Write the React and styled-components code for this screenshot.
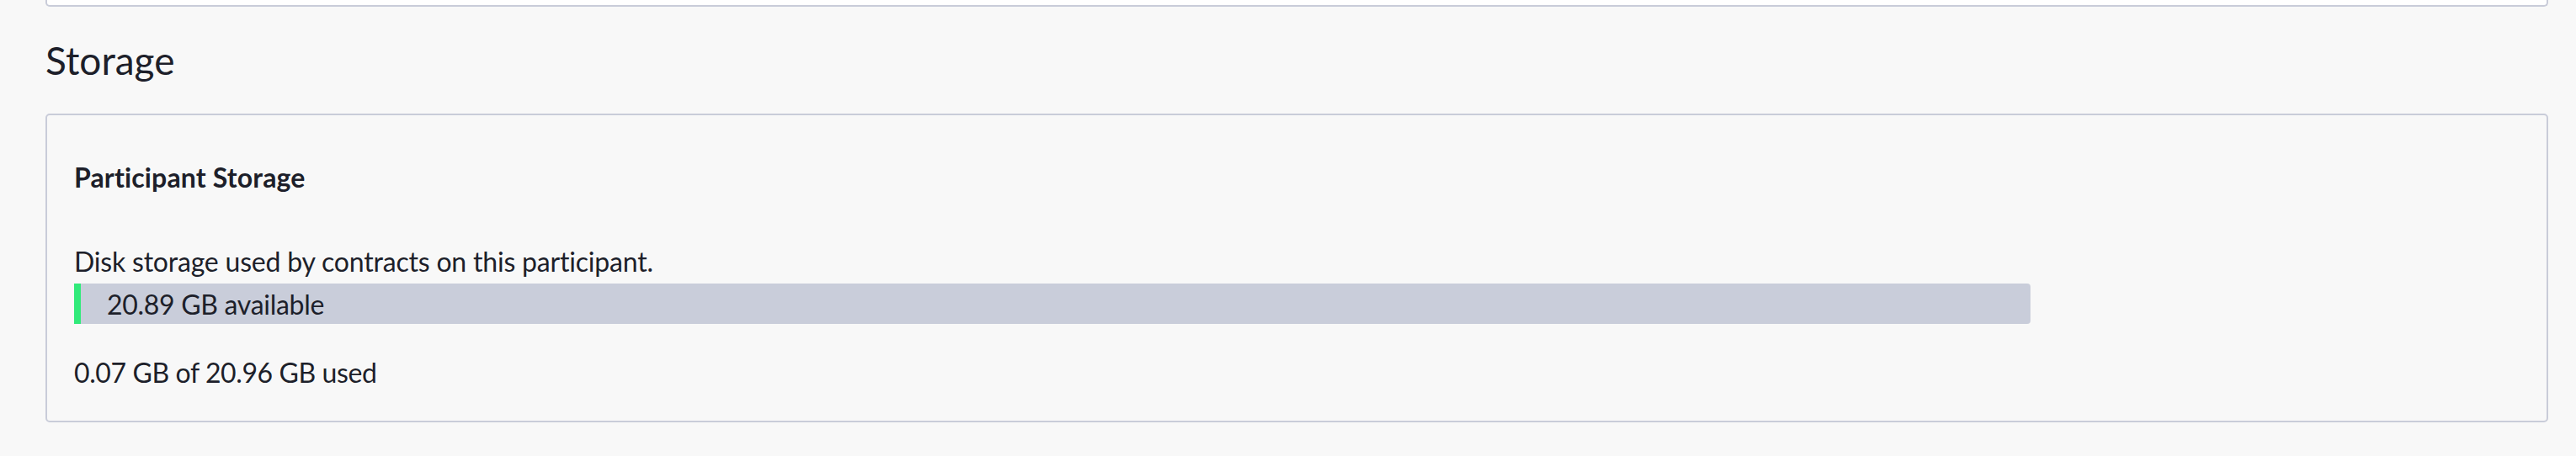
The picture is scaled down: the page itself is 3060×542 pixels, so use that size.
import React from "react";
import styled, { createGlobalStyle } from "styled-components";

const colors = {
  PAGE: "#f8f8f8",
  WHITE: "#ffffff",
  BORDER: "#c9ccd9",
  TEXT: "#1d1f2a",
  TRACK: "#c9cdda",
  GREEN: "#31ea7a",
};

const storage = { used: 0.07, total: 20.96 };

const GlobalStyle = createGlobalStyle`
  html, body {
    margin: 0;
    padding: 0;
    background: ${colors.PAGE};
  }
  body {
    font-family: Lato, "Liberation Sans", sans-serif;
    color: ${colors.TEXT};
  }
  * {
    box-sizing: border-box;
  }
`;

export default function App() {
  const available = (storage.total - storage.used).toFixed(2);
  const usedPct = (storage.used / storage.total) * 100;

  return (
    <>
      <GlobalStyle />
      <Page>
        <PrevCard />
        <SectionTitle>Storage</SectionTitle>
        <Card>
          <CardTitle>Participant Storage</CardTitle>
          <Text $top={52} $spacing={-0.2}>
            Disk storage used by contracts on this participant.
          </Text>
          <Track>
            <Fill style={{ width: `${usedPct}%` }} />
            <TrackLabel>{available} GB available</TrackLabel>
          </Track>
          <Text $top={34} $spacing={-0.4}>
            {storage.used.toFixed(2)} GB of {storage.total.toFixed(2)} GB used
          </Text>
        </Card>
      </Page>
    </>
  );
}

const Page = styled.main`
  display: flex;
  flex-direction: column;
  padding: 0 33px 40px 54px;
`;

// bottom edge of the card above, scrolled out of view
const PrevCard = styled.div`
  height: 8px;
  background: ${colors.WHITE};
  border: 2px solid ${colors.BORDER};
  border-top: none;
  border-radius: 0 0 5px 5px;
`;

const SectionTitle = styled.h2`
  margin: 36px 0;
  font-size: 46px;
  font-weight: 400;
  line-height: 1.2;
`;

const Card = styled.section`
  display: flex;
  flex-direction: column;
  align-items: flex-start;
  border: 2px solid ${colors.BORDER};
  border-radius: 5px;
  padding: 50px 32px 33px;
`;

const CardTitle = styled.h3`
  margin: 0;
  font-size: 32px;
  font-weight: 700;
  line-height: 48px;
  letter-spacing: 0.15px;
`;

const Text = styled.p`
  margin: ${(p) => p.$top || 0}px 0 0;
  font-size: 32px;
  line-height: 48px;
  letter-spacing: ${(p) => p.$spacing || 0}px;
`;

const Track = styled.div`
  position: relative;
  width: 80%;
  height: 48px;
  margin-top: 2px;
  background: ${colors.TRACK};
  border-radius: 4px;
`;

const Fill = styled.div`
  position: absolute;
  top: 0;
  left: 0;
  bottom: 0;
  background: ${colors.GREEN};
`;

const TrackLabel = styled.span`
  position: relative;
  display: block;
  padding: 2px 0 0 39px;
  font-size: 32px;
  line-height: 46px;
  letter-spacing: -0.3px;
`;
